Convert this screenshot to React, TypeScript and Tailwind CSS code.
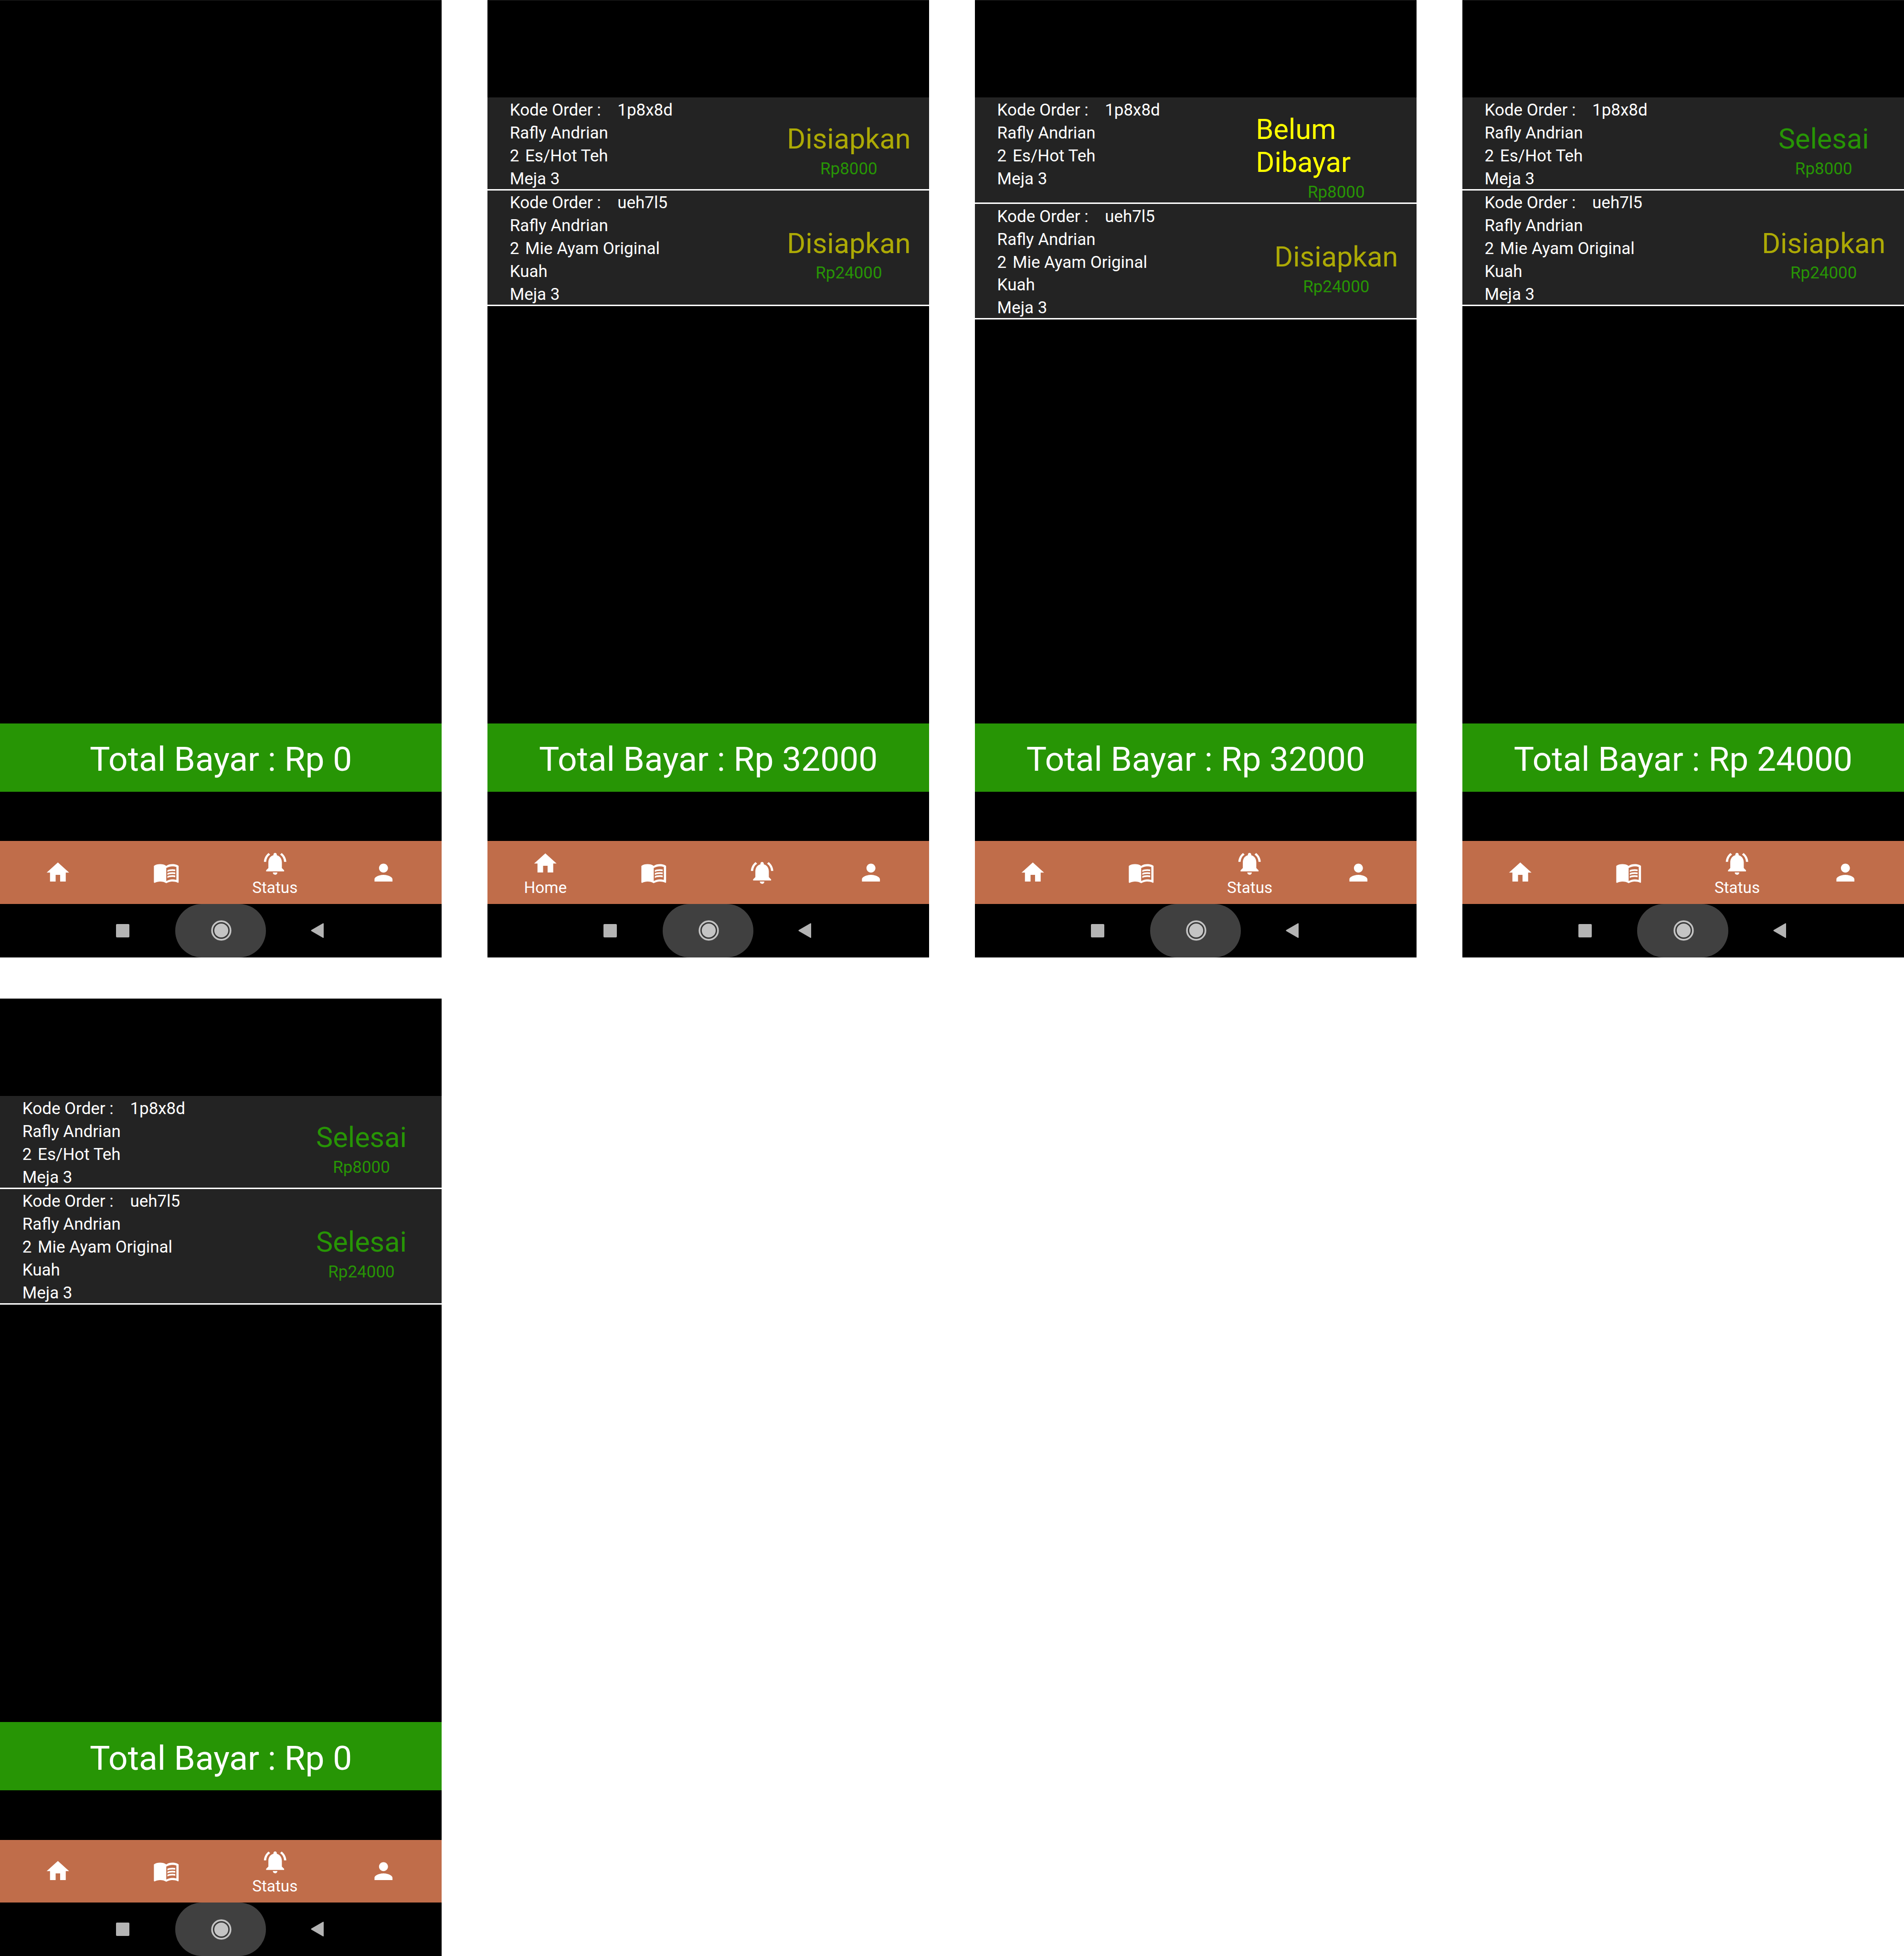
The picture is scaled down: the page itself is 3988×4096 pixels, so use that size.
import React from "react";
import { MdHome, MdMenuBook, MdNotificationsActive, MdPerson } from "react-icons/md";

type Status = "Belum Dibayar" | "Disiapkan" | "Selesai";
type Tab = "Home" | "Status";

interface Order {
  code: string;
  item: string;
  price: string;
  status: Status;
}

interface Screen {
  orders: Order[];
  total: string;
  active: Tab;
}

const statusColor: Record<Status, string> = {
  "Belum Dibayar": "text-[#ffff00]",
  Disiapkan: "text-[#adaa05]",
  Selesai: "text-[#279505]",
};

const tea = (status: Status): Order => ({ code: "1p8x8d", item: "Es/Hot Teh", price: "Rp8000", status });
const noodles = (status: Status): Order => ({
  code: "ueh7l5",
  item: "Mie Ayam Original Kuah",
  price: "Rp24000",
  status,
});

const screens: Screen[] = [
  { orders: [], total: "0", active: "Status" },
  { orders: [tea("Disiapkan"), noodles("Disiapkan")], total: "32000", active: "Home" },
  { orders: [tea("Belum Dibayar"), noodles("Disiapkan")], total: "32000", active: "Status" },
  { orders: [tea("Selesai"), noodles("Disiapkan")], total: "24000", active: "Status" },
  { orders: [tea("Selesai"), noodles("Selesai")], total: "0", active: "Status" },
];

const tabs = [
  { name: "Home", Icon: MdHome },
  { name: "Menu", Icon: MdMenuBook },
  { name: "Status", Icon: MdNotificationsActive },
  { name: "Profil", Icon: MdPerson },
];

function OrderCard({ order }: { order: Order }) {
  return (
    <>
      <div className="flex shrink-0 justify-between bg-[#232323]">
        <div className="-mb-[3px] w-[420px] pl-[46.8px] pt-[3px] text-[34.95px] leading-[47.98px] text-white">
          <div className="flex">
            <span className="w-[225.6px] whitespace-nowrap">Kode Order :</span>
            <span>{order.code}</span>
          </div>
          <div>Rafly Andrian</div>
          <div className="first-letter:mr-[4px]">{`2 ${order.item}`}</div>
          <div>Meja 3</div>
        </div>
        <div className="flex w-[336.5px] flex-col items-center justify-center pt-[31.7px]">
          <div className={`text-[59.35px] leading-[69.4px] ${statusColor[order.status]}`}>{order.status}</div>
          <div className="-mb-[2.8px] mt-[4.5px] text-[34.95px] leading-[47.98px] text-[#279505]">{order.price}</div>
        </div>
      </div>
      <div className="relative -mb-[0.55px] h-[3px] shrink-0 bg-white" />
    </>
  );
}

function TabBar({ active }: { active: Tab }) {
  return (
    <nav className="grid h-[131.9px] shrink-0 grid-cols-4 bg-[#c06d4a] pl-[7.9px] pr-[8.7px] text-white">
      {tabs.map(({ name, Icon }) => (
        <div
          key={name}
          className={`flex flex-col items-center ${name === active ? "pt-[18.85px]" : "pt-[37.7px]"}`}
        >
          <Icon className="size-[56.5px] shrink-0" />
          {name === active && <span className="mt-[2.8px] text-[33.3px] leading-[38.6px]">{name}</span>}
        </div>
      ))}
    </nav>
  );
}

function SystemBar() {
  return (
    <div className="flex h-[111.4px] shrink-0 items-center bg-black pl-[243.3px]">
      <div className="size-[28px] rounded-[2px] bg-[#b4b4b4]" />
      <div className="ml-[95.4px] flex h-full w-[190.2px] items-center justify-center rounded-full bg-[#404040] pl-[3.2px]">
        <svg className="size-[43px]" viewBox="0 0 50 50">
          <circle cx="25" cy="25" r="22.5" fill="#383838" stroke="#c4c4c4" strokeWidth="4.2" />
          <circle cx="25" cy="25" r="17" fill="#c4c4c4" />
        </svg>
      </div>
      <svg className="ml-[94.2px] h-[31.4px] w-[27.3px]" viewBox="0 0 32 37">
        <path
          d="M2 18.5 30.5 2V35Z"
          fill="#b4b4b4"
          stroke="#b4b4b4"
          strokeWidth="3"
          strokeLinejoin="round"
        />
      </svg>
    </div>
  );
}

function Phone({ screen }: { screen: Screen }) {
  return (
    <div className="flex h-[2004.7px] flex-col overflow-hidden bg-black shadow-[inset_0_1px_0_#222222]">
      <div className="flex h-[1514.7px] shrink-0 flex-col pt-[203.9px]">
        {screen.orders.map((order) => (
          <OrderCard key={order.code} order={order} />
        ))}
      </div>
      <div className="mb-[103.6px] flex h-[143.1px] shrink-0 items-center justify-center bg-[#279505] pt-[8.2px] text-[71.2px] leading-[82px] text-white">
        Total Bayar : Rp {screen.total}
      </div>
      <TabBar active={screen.active} />
      <SystemBar />
    </div>
  );
}

export default function App() {
  return (
    <div className="grid h-[4096px] w-[3988px] grid-cols-[repeat(4,925.25px)] content-start gap-x-[95.66px] gap-y-[86.5px] overflow-hidden bg-white font-[Roboto,sans-serif]">
      {screens.map((screen, i) => (
        <Phone key={i} screen={screen} />
      ))}
    </div>
  );
}
